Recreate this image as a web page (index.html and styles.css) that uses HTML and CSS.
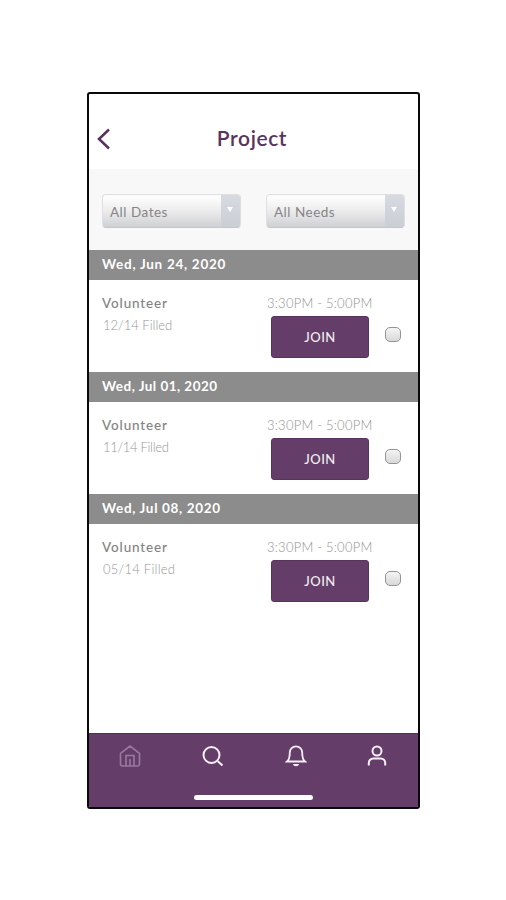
FILE: index.html
```html
<!DOCTYPE html>
<html lang="en">
<head>
<meta charset="utf-8">
<title>Project</title>
<link rel="stylesheet" href="styles.css">
</head>
<body>
<main class="phone">
  <header class="header">
    <svg class="back" viewBox="0 0 14 22"><path d="M12 1.500 2 11l10 9.500"/></svg>
    <h1 class="title">Project</h1>
  </header>
  <section class="filters">
    <div class="select"><span class="label">All Dates</span><span class="arrow"><i></i></span></div>
    <div class="select"><span class="label">All Needs</span><span class="arrow"><i></i></span></div>
  </section>
  <section class="list">
    <h2 class="date d1">Wed, Jun 24, 2020</h2>
    <div class="row">
      <div class="info"><div class="role">Volunteer</div><div class="filled f1">12/14 Filled</div></div>
      <div class="slot"><div class="time">3:30PM - 5:00PM</div><button class="join">JOIN</button></div>
      <span class="check"></span>
    </div>
    <h2 class="date d2">Wed, Jul 01, 2020</h2>
    <div class="row">
      <div class="info"><div class="role">Volunteer</div><div class="filled f2">11/14 Filled</div></div>
      <div class="slot"><div class="time">3:30PM - 5:00PM</div><button class="join">JOIN</button></div>
      <span class="check"></span>
    </div>
    <h2 class="date d3">Wed, Jul 08, 2020</h2>
    <div class="row">
      <div class="info"><div class="role">Volunteer</div><div class="filled f3">05/14 Filled</div></div>
      <div class="slot"><div class="time">3:30PM - 5:00PM</div><button class="join">JOIN</button></div>
      <span class="check"></span>
    </div>
  </section>
  <nav class="nav">
    <div class="tabs">
      <svg class="icon home" viewBox="0 0 22 24"><path d="M1.500 9.300 11 2l9.500 7.300V20a2 2 0 0 1-2 2h-15a2 2 0 0 1-2-2ZM7 22V11.500h8V22M11 15v7"/></svg>
      <svg class="icon search" viewBox="0 0 22 24"><circle cx="9.500" cy="11" r="8"/><path d="m15.500 17 5 4.500"/></svg>
      <svg class="icon bell" viewBox="0 0 22 24"><path d="M2 17.500h18c-2-1.500-2.800-4-2.800-9a6.200 6.200 0 0 0-12.400 0c0 5-.8 7.500-2.800 9Z"/><path class="clapper" d="M8 20h6c-.6 3-5.400 3-6 0Z"/></svg>
      <svg class="icon user" viewBox="0 0 22 24"><circle cx="11" cy="7" r="4.500"/><path d="M2.800 21.500V19a4.500 4.500 0 0 1 4.500-4.500h7.400a4.500 4.500 0 0 1 4.500 4.500v2.500"/></svg>
    </div>
    <div class="indicator"></div>
  </nav>
</main>
</body>
</html>
```

FILE: styles.css
```css
* { box-sizing: border-box; }
body { margin: 0; background: #fff; font-family: Lato, "Open Sans", sans-serif; }
.phone { display: flex; flex-direction: column; width: 333px; height: 717px; margin: 92px 0 0 87px; border: 2px solid #0b080c; border-radius: 3px; overflow: hidden; background: #fff; }
.header { display: grid; grid-template-columns: 30px 1fr 41px; align-items: center; height: 75px; padding: 15px 0 0 8px; }
.back { width: 14px; height: 22px; fill: none; stroke: #57305d; stroke-width: 2.5; }
.title { margin: -2px 0 0; text-align: center; font-size: 21px; line-height: 26px; font-weight: 600; letter-spacing: .6px; color: #58345f; }
.filters { display: flex; gap: 25px; height: 81px; padding: 25px 13px 0; background: #f8f8f8; }
.select { display: flex; justify-content: space-between; width: 139px; height: 34px; border: 1px solid #dedfe1; border-bottom-color: #c5c6c9; border-radius: 4px; overflow: hidden; background: linear-gradient(#fcfcfc 10%, #ececed 50%, #cfd0d3); }
.label { padding-left: 7px; font-size: 13.5px; line-height: 34px; letter-spacing: .5px; color: #858585; }
.arrow { width: 19px; padding: 12px 0 0 6px; background: linear-gradient(#d7dae0, #cbced4); }
.arrow i { display: block; width: 6px; border: 3px solid transparent; border-top: 5px solid #fff; border-bottom: 0; }
.date { margin: 0; height: 30px; padding-left: 13px; background: #8c8c8c; color: #fff; font-size: 13.5px; line-height: 29px; font-weight: 700; }
.d1 { letter-spacing: .72px; }
.d2 { letter-spacing: .47px; }
.d3 { letter-spacing: .66px; }
.row { display: flex; height: 92px; padding: 15px 0 0 13px; }
.info { width: 165px; }
.role { height: 18px; font-size: 13.5px; line-height: 17px; font-weight: 500; letter-spacing: .85px; color: #838383; }
.filled { margin-top: 3px; padding-left: 1px; font-size: 13px; line-height: 18px; color: #979797; font-weight: 300; }
.f2 { letter-spacing: -.3px; }
.f3 { letter-spacing: .25px; }
.slot { width: 118px; }
.time { height: 21px; font-size: 13px; line-height: 17px; font-weight: 300; letter-spacing: .23px; color: #929292; white-space: nowrap; }
.join { display: block; width: 98px; height: 42px; margin-left: 4px; padding: 0; border: 1px solid #593360; border-radius: 3px; background: #643e68; color: #f4eef5; font: 500 13px/40px Lato, sans-serif; letter-spacing: .5px; }
.check { width: 16px; height: 15px; margin-top: 32px; border: 1.5px solid #949494; border-radius: 5px; background: linear-gradient(#f4f4f4, #d8d8d8); }
.nav { height: 74px; margin-top: auto; border-top: 1px solid #542b58; background: #643e68; }
.tabs { display: flex; padding: 10px 0 0 30px; height: 60px; }
.icon { width: 22px; height: 24px; margin-right: 61px; fill: none; stroke: #f7eff8; stroke-width: 2; flex: none; }
.home { stroke: #997a9d; stroke-width: 1.6; }
.bell { margin-right: 59px; stroke-width: 1.8; }
.clapper { fill: #f7eff8; stroke: none; }
.indicator { width: 119px; height: 5px; margin: 1px 0 0 105px; border-radius: 3px; background: #fff; }
```
